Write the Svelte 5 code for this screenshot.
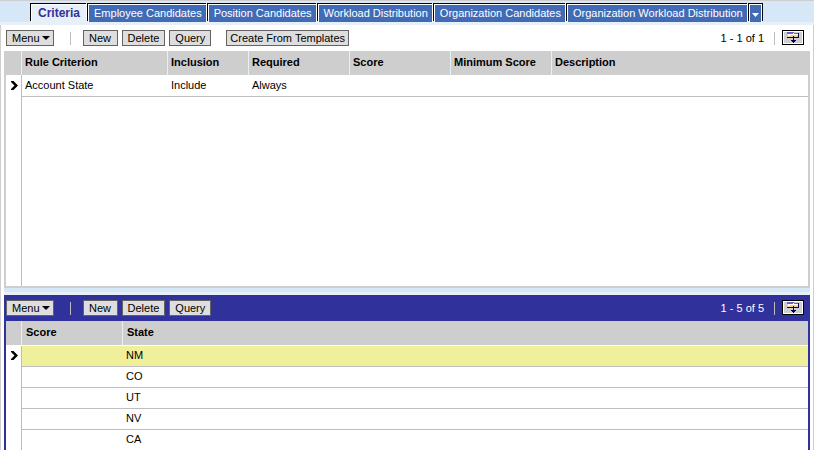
<script>
    const tabs = [
        'Criteria',
        'Employee Candidates',
        'Position Candidates',
        'Workload Distribution',
        'Organization Candidates',
        'Organization Workload Distribution'
    ];
    let activeTab = $state(0);

    const criteria = [
        {criterion: 'Account State', inclusion: 'Include', required: 'Always', score: '', minimum: '', description: ''}
    ];
    const states = ['NM', 'CO', 'UT', 'NV', 'CA'];
    let selectedState = $state(0);
</script>

{#snippet toolbar(count, templates)}
    <div class="toolbar">
        <button class="btn menu">Menu
            <svg width="8" height="4" viewBox="0 0 8 4" aria-hidden="true"><path d="M0 0h8L4 4z"/></svg>
        </button>
        <span class="divider"></span>
        <div class="group">
            <button class="btn">New</button>
            <button class="btn">Delete</button>
            <button class="btn">Query</button>
        </div>
        {#if templates}
            <button class="btn templates">Create From Templates</button>
        {/if}
        <span class="count">{count}</span>
        <span class="divider end"></span>
        <button class="more" aria-label="Show more">
            <svg width="12" height="11" viewBox="0 0 12 11" shape-rendering="crispEdges" aria-hidden="true">
                <path fill="#fff" d="M1 1h10v4H1z"/>
                <path fill="#ffce84" d="M3 3h8v2H1V4h2z"/>
                <path fill="#6363ce" d="M0 0h7v1h5v1H7V1H6v1H0z"/>
                <path fill="#000063" d="M0 5h12v1H0zM11 1h1v5h-1zM6 4h1v6H6zM4 8h5v1H4zM5 9h3v1H5zM6 10h1v1H6z"/>
            </svg>
        </button>
    </div>
{/snippet}

{#snippet marker()}
    <svg class="marker" width="7" height="9" viewBox="0 0 7 9" aria-label="Current row"><path d="M0 0h2.5L7 4.5 2.5 9H0V8l3.5-3.5L0 1z"/></svg>
{/snippet}

<nav class="tabs">
    {#each tabs as tab, index}
        <button class="tab" class:active={activeTab === index} onclick={() => activeTab = index}>{tab}</button>
    {/each}
    <button class="tab overflow" aria-label="More tabs">
        <svg width="7" height="4" viewBox="0 0 7 4" aria-hidden="true"><path d="M0 0h7L3.5 4z"/></svg>
    </button>
</nav>

<main>
    <section>
        {@render toolbar('1 - 1 of 1', true)}
        <table class="criteria">
            <colgroup>
                <col class="gutter-col"><col class="name-col"><col class="inclusion-col">
                <col class="value-col"><col class="value-col"><col class="value-col"><col>
            </colgroup>
            <thead>
                <tr>
                    <th></th>
                    <th>Rule Criterion</th>
                    <th>Inclusion</th>
                    <th>Required</th>
                    <th>Score</th>
                    <th>Minimum Score</th>
                    <th>Description</th>
                </tr>
            </thead>
            <tbody>
                {#each criteria as row}
                    <tr>
                        <td class="gutter">{@render marker()}</td>
                        <td>{row.criterion}</td>
                        <td>{row.inclusion}</td>
                        <td>{row.required}</td>
                        <td>{row.score}</td>
                        <td>{row.minimum}</td>
                        <td>{row.description}</td>
                    </tr>
                {/each}
                <tr class="filler"><td class="gutter"></td><td colspan="6"></td></tr>
            </tbody>
        </table>
    </section>

    <div class="gap"></div>

    <section class="current">
        {@render toolbar('1 - 5 of 5', false)}
        <table class="states">
            <colgroup><col class="gutter-col"><col class="value-col"><col></colgroup>
            <thead>
                <tr><th></th><th>Score</th><th>State</th></tr>
            </thead>
            <tbody>
                {#each states as state, index}
                    <tr class:selected={selectedState === index} onclick={() => selectedState = index}>
                        <td class="gutter">{#if selectedState === index}{@render marker()}{/if}</td>
                        <td></td>
                        <td>{state}</td>
                    </tr>
                {/each}
            </tbody>
        </table>
    </section>
</main>

<style>
    :global(body) {
        margin: 0;
        background: #fff;
    }
    :global(#app) {
        display: flex;
        flex-direction: column;
        min-height: 100vh;
        font: 11px/13px "Liberation Sans", Arial, sans-serif;
        color: #000;
    }
    button {
        font: inherit;
        margin: 0;
        white-space: nowrap;
        cursor: pointer;
    }
    svg {
        display: block;
    }
    .tabs {
        display: flex;
        height: 18px;
        padding: 3px 0 0 30px;
        background: #d6e7f7;
        border-top: 1px solid #cecece;
        border-bottom: 3px solid #e7eff7;
    }
    .tab {
        padding: 0 4px 1px 5px;
        color: #fff;
        background: #426bb5;
        border: 1px solid #fff;
        border-bottom: 0;
        box-shadow: -1px -1px 0 #000;
        margin-left: 1px;
    }
    .tab.active {
        padding: 0 6px 1px;
        font-size: 12px;
        font-weight: bold;
        color: #31319c;
        background: #e7eff7;
    }
    .tab.overflow {
        display: flex;
        align-items: center;
        width: 13px;
        padding: 2px 2px 0;
        box-shadow: -1px -1px 0 #000, 1px -1px 0 #000;
    }
    .overflow svg {
        flex: none;
        fill: #fff;
    }
    main {
        flex: 1;
        display: flex;
        flex-direction: column;
        padding: 0 3px;
        border: solid #cecece;
        border-width: 0 1px;
    }
    .toolbar {
        display: flex;
        align-items: center;
        height: 26px;
        padding: 0 6px 0 2px;
        box-sizing: border-box;
    }
    .btn {
        min-width: 35px;
        height: 16px;
        padding: 0 5px;
        color: #000;
        background: #dedede;
        border: 1px solid #636363;
        line-height: 14px;
    }
    .menu {
        display: flex;
        align-items: center;
        gap: 2px;
        padding: 0 3px 0 5px;
    }
    .divider {
        width: 1px;
        height: 13px;
        margin: 0 12px 0 16px;
        background: #bdbdbd;
    }
    .group {
        display: flex;
        gap: 4px;
    }
    .templates {
        margin-left: 15px;
        padding: 0 3px;
    }
    .count {
        margin-left: auto;
    }
    .divider.end {
        margin: 0 7px 0 10px;
    }
    .more {
        display: flex;
        justify-content: center;
        align-items: center;
        align-self: flex-start;
        width: 22px;
        height: 15px;
        margin-top: 5px;
        padding: 0;
        background: #cecece;
        border: 1px solid #000;
        box-shadow: inset 0 0 0 1px #fff;
    }
    table {
        width: 100%;
        table-layout: fixed;
        border-collapse: separate;
        border-spacing: 0;
        box-sizing: border-box;
        border: solid #cecece;
        border-width: 0 2px 2px;
    }
    .gutter-col {
        width: 16px;
    }
    .name-col {
        width: 146px;
    }
    .inclusion-col {
        width: 81px;
    }
    .value-col {
        width: 101px;
    }
    th, td {
        padding: 0 3px;
        text-align: left;
        white-space: nowrap;
        box-sizing: border-box;
    }
    th {
        height: 24px;
        font-weight: bold;
        background: #cecece;
        border-right: 1px solid #e7eff7;
        padding-bottom: 1px;
    }
    th:last-child {
        border-right: 0;
    }
    td {
        height: 21px;
        padding-bottom: 1px;
        border-bottom: 1px solid #bdbdbd;
    }
    .criteria td {
        height: 22px;
    }
    .criteria .filler td {
        height: 189px;
        border-bottom: 0;
    }
    .gutter, .criteria .gutter {
        padding: 0 0 2px 5px;
        border-bottom: 0;
        border-right: 1px solid #bdbdbd;
        background: #fff;
    }
    .gap {
        height: 4px;
        background: #d6e7f7;
        border-bottom: 3px solid #e7eff7;
    }
    .current {
        flex: 1;
        background: #fff;
        border: solid #31319c;
        border-width: 0 2px;
    }
    .current .toolbar {
        padding: 0 4px 0 0;
        background: #31319c;
    }
    .current .count {
        color: #fff;
    }
    .states {
        border: 0;
    }
    .states th {
        height: 25px;
        padding-left: 4px;
        border-bottom: 1px solid #fff;
    }
    .states tr:last-child td {
        height: 20px;
        border-bottom: 0;
    }
    .selected td {
        background: #efef9c;
    }
    .selected td.gutter {
        background: #fff;
    }
</style>
